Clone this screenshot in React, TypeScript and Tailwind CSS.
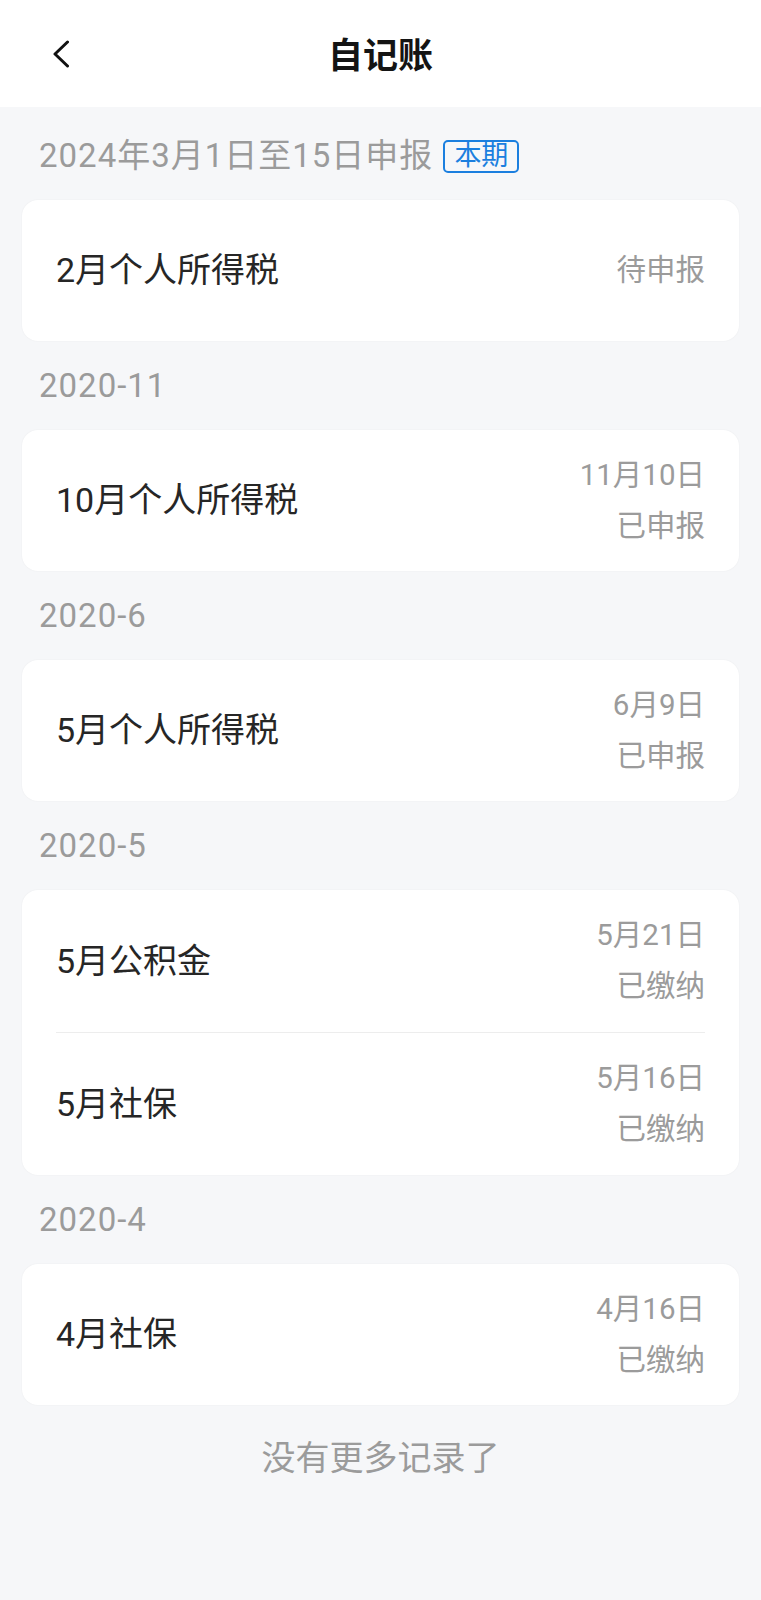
type Row = { title: string; date?: string; status: string }
type Section = { label: string; current?: boolean; rows: Row[] }

const sections: Section[] = [
  { label: "2024年3月1日至15日申报", current: true, rows: [{ title: "2月个人所得税", status: "待申报" }] },
  { label: "2020-11", rows: [{ title: "10月个人所得税", date: "11月10日", status: "已申报" }] },
  { label: "2020-6", rows: [{ title: "5月个人所得税", date: "6月9日", status: "已申报" }] },
  {
    label: "2020-5",
    rows: [
      { title: "5月公积金", date: "5月21日", status: "已缴纳" },
      { title: "5月社保", date: "5月16日", status: "已缴纳" },
    ],
  },
  { label: "2020-4", rows: [{ title: "4月社保", date: "4月16日", status: "已缴纳" }] },
]

const BackIcon = () => (
  <svg width="16" height="28" viewBox="0 0 16 28" fill="none">
    <polyline points="14.5,2 2,14 14.5,26" stroke="#111" strokeWidth="3" strokeLinecap="round" strokeLinejoin="round" />
  </svg>
)

const RecordRow = ({ row, tall }: { row: Row; tall: boolean }) => (
  <div className={`flex items-center justify-between ${tall ? "h-[142px]" : "h-[141px]"}`}>
    <span className="text-[34px] text-[#262626]">{row.title}</span>
    <div className="flex flex-col items-end text-[29.5px] leading-[51px] text-[#9b9b9b]">
      {row.date && <span>{row.date}</span>}
      <span>{row.status}</span>
    </div>
  </div>
)

export default function App() {
  return (
    <div className="min-h-[1600px] bg-[#f6f7f9] font-['Roboto','Noto_Sans_CJK_SC',sans-serif]">
      <header className="grid h-[107px] grid-cols-[1fr_auto_1fr] items-center bg-white pt-[8px]">
        <div className="pl-[53px] pb-[7px]">
          <BackIcon />
        </div>
        <h1 className="text-[35px] font-bold text-[#141414]">自记账</h1>
        <div />
      </header>

      <main className="px-[22px]">
        {sections.map((s, i) => (
          <section key={s.label}>
            <div
              className={`flex items-center px-[17px] text-[33px] tracking-[1px] text-[#9b9b9b] ${
                i === 0 ? "h-[93px] pt-[5px]" : "h-[89px]"
              }`}
            >
              <span>{s.label}</span>
              {s.current && (
                <span className="ml-[10px] flex h-[33px] items-center rounded-[5px] border-2 border-[#1b7fdf] px-[9px] text-[27px] leading-none tracking-normal text-[#1b7fdf]">
                  本期
                </span>
              )}
            </div>
            <div className="rounded-[16px] bg-white px-[34px] shadow-[0_0_2px_rgba(0,0,0,0.05)]">
              {s.rows.map((r, j) => (
                <div key={r.title} className={j > 0 ? "border-t border-[#ededed]" : ""}>
                  <RecordRow row={r} tall={s.rows.length > 1} />
                </div>
              ))}
            </div>
          </section>
        ))}

        <p className="mt-[33px] text-center text-[34px] leading-[40px] text-[#9b9b9b]">没有更多记录了</p>
      </main>
    </div>
  )
}
